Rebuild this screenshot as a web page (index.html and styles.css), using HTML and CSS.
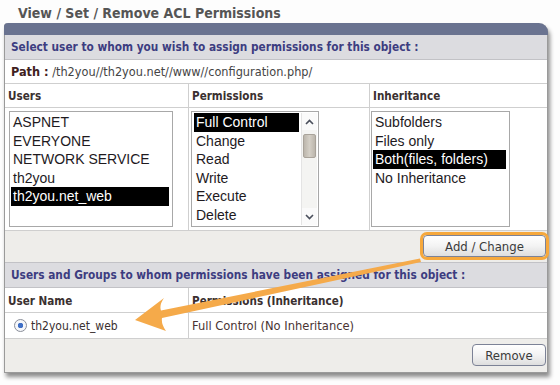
FILE: index.html
```html
<!DOCTYPE html>
<html lang="en">
<head>
  <meta charset="UTF-8" />
  <meta name="viewport" content="width=device-width, initial-scale=1.0"/>
  <title>View / Set / Remove ACL Permissions</title>
  <link rel="stylesheet" href="styles.css">
</head>
<body>

<div class="page">
  <h1 class="title">View / Set / Remove ACL Permissions</h1>

  <div class="panel">
    <div class="bar"></div>
    <div class="caption">Select user to whom you wish to assign permissions for this object :</div>
    <div class="path"><b>Path :</b> /th2you//th2you.net//www//configuration.php/</div>

    <div class="cols3 heads">
      <div>Users</div>
      <div>Permissions</div>
      <div>Inheritance</div>
    </div>

    <div class="cols3 lists">
      <div class="cell">
        <div class="listbox users">
          <div class="opt">ASPNET</div>
          <div class="opt">EVERYONE</div>
          <div class="opt">NETWORK SERVICE</div>
          <div class="opt">th2you</div>
          <div class="opt selected">th2you.net_web</div>
        </div>
      </div>
      <div class="cell">
        <div class="listbox perms">
          <div class="options">
            <div class="opt selected">Full Control</div>
            <div class="opt">Change</div>
            <div class="opt">Read</div>
            <div class="opt">Write</div>
            <div class="opt">Execute</div>
            <div class="opt">Delete</div>
          </div>
          <div class="scrollbar">
            <div class="sb-btn">
              <svg width="9" height="6" viewBox="0 0 9 6"><path d="M1 5 L4.5 1.5 L8 5" fill="none" stroke="#4a4f5c" stroke-width="1.6"/></svg>
            </div>
            <div class="sb-track"><div class="sb-thumb"></div></div>
            <div class="sb-btn">
              <svg width="9" height="6" viewBox="0 0 9 6"><path d="M1 1 L4.5 4.5 L8 1" fill="none" stroke="#4a4f5c" stroke-width="1.6"/></svg>
            </div>
          </div>
        </div>
      </div>
      <div class="cell">
        <div class="listbox inherit">
          <div class="opt">Subfolders</div>
          <div class="opt">Files only</div>
          <div class="opt selected">Both(files, folders)</div>
          <div class="opt">No Inheritance</div>
        </div>
      </div>
    </div>

    <div class="actions">
      <button class="btn btn-focus">Add / Change</button>
    </div>

    <div class="caption">Users and Groups to whom permissions have been assigned for this object :</div>

    <div class="cols2 heads">
      <div>User Name</div>
      <div>Permissions (Inheritance)</div>
    </div>
    <div class="cols2 entry">
      <div><span class="radio"></span>th2you.net_web</div>
      <div class="perm-text">Full Control (No Inheritance)</div>
    </div>

    <div class="actions bottom">
      <button class="btn btn-remove">Remove</button>
    </div>
  </div>

  <svg class="arrow" width="560" height="385" viewBox="0 0 560 385">
    <path d="M135 320 L164 298 Q159 305 161 310.5 L420 258.5 L421 262 L162 318 Q161 324 166 331 Z" fill="#f5aa4a"/>
  </svg>
</div>

</body>
</html>
```

FILE: styles.css
```css
* {
  box-sizing: border-box;
}

body {
  margin: 0;
  background: #fdfdfd;
  font-family: "DejaVu Sans Condensed", "DejaVu Sans", sans-serif;
  font-size: 11px;
  color: #333;
}

.page {
  position: relative;
  width: 560px;
  height: 385px;
  padding-left: 4px;
}

.title {
  margin: 0;
  height: 23px;
  padding: 5px 0 0 14px;
  font-size: 14px;
  line-height: 16px;
  font-weight: bold;
  color: #555;
}

.panel {
  width: 544px;
  border: 1px solid #9a9a9a;
  border-top: none;
  border-radius: 4px 9px 0 0;
  background: #fff;
  box-shadow: 2px 4px 4px rgba(0, 0, 0, 0.45);
}

.bar {
  height: 12px;
  margin: 0 -1px;
  background: #6a7390;
  border-radius: 4px 9px 0 0;
}

.caption {
  height: 25px;
  padding: 5px 0 0 6px;
  background: #dcdce0;
  border-bottom: 1px solid #c2c2c6;
  color: #3d3d80;
  font-weight: bold;
  font-size: 11.75px;
  line-height: 14px;
}

.path {
  height: 24px;
  padding: 4px 0 0 6px;
  border-bottom: 1px solid #cfcfcf;
  color: #444;
  font-size: 12.6px;
  line-height: 15px;
}

.path b {
  color: #402020;
}

.cols3 {
  display: grid;
  grid-template-columns: 183px 181px 1fr;
  border-bottom: 1px solid #cfcfcf;
}

.cols3 > div + div,
.cols2 > div + div {
  border-left: 1px solid #cfcfcf;
}

.cols2 {
  display: grid;
  grid-template-columns: 183px 1fr;
  border-bottom: 1px solid #cfcfcf;
}

.heads {
  height: 24px;
}

.heads > div {
  padding: 5px 0 0 3px;
  font-weight: bold;
  font-size: 11.6px;
  color: #3a3030;
  line-height: 14px;
}

.cols2.heads {
  height: 25px;
}

.cols2.heads > div {
  padding-top: 6px;
}

.lists {
  height: 123px;
}

.lists .cell {
  padding-top: 3px;
}

.lists .cell:first-child {
  padding-left: 4px;
}

.lists .cell:nth-child(2) {
  padding-left: 2px;
}

.lists .cell:nth-child(3) {
  padding-left: 1px;
}

.listbox {
  height: 116px;
  border: 1px solid #a8a8a8;
  padding: 1px;
  background: #fff;
  font-family: "Liberation Sans", Arial, sans-serif;
  font-size: 14px;
  line-height: 18.5px;
  color: #1e1a1e;
  overflow: hidden;
}

.listbox.users {
  width: 164px;
}

.listbox.perms {
  width: 128px;
  display: flex;
}

.listbox.inherit {
  width: 139px;
}

.opt {
  padding-left: 2px;
  margin-right: 2px;
  white-space: nowrap;
}

.opt.selected {
  background: #000;
  color: #fff;
}

.perms .options {
  flex: 1;
  padding-left: 1px;
}

.scrollbar {
  width: 16px;
  display: flex;
  flex-direction: column;
  background: #f4f4f2;
  border-left: 1px solid #e4e4e4;
}

.sb-btn {
  height: 17px;
  display: flex;
  align-items: center;
  justify-content: center;
  background: #fafafa;
}

.sb-track {
  flex: 1;
  padding-top: 4px;
}

.sb-thumb {
  height: 24px;
  margin: 0 1px;
  background: linear-gradient(to right, #bcb6ac, #d4cfc6 50%, #bcb6ac);
  border: 1px solid #a9a39a;
  border-radius: 2px;
}

.actions {
  height: 32px;
  background: #eeedea;
  border-bottom: 1px solid #c2c2c6;
  display: flex;
  justify-content: flex-end;
  padding: 4px 1px 0 0;
}

.actions.bottom {
  height: 33px;
  border-bottom: none;
  padding-top: 5px;
}

.btn {
  height: 22px;
  border: 1px solid #7c8296;
  border-radius: 4px;
  background: linear-gradient(to bottom, #ffffff, #f3f3f3 50%, #dedede);
  font-family: "DejaVu Sans Condensed", "DejaVu Sans", sans-serif;
  font-size: 13px;
  color: #3a3a3a;
  padding: 0;
}

.btn-focus {
  width: 123px;
  outline: 3px solid #f6a83c;
  outline-offset: 0;
}

.btn-remove {
  width: 74px;
}

.entry {
  height: 26px;
}

.entry > div {
  display: flex;
  align-items: center;
  padding-left: 3px;
  font-size: 12px;
  color: #3a3030;
}

.entry > div:first-child {
  padding-left: 9px;
}

.entry > .perm-text {
  font-size: 12.8px;
  color: #4a3434;
}

.radio {
  width: 13px;
  height: 13px;
  border: 1px solid #8a8e99;
  border-radius: 50%;
  background: radial-gradient(circle, #3f6fc6 0 2.5px, #f4f6fa 3px);
  margin-right: 4px;
}

.arrow {
  position: absolute;
  left: 0;
  top: 0;
  pointer-events: none;
}
```
